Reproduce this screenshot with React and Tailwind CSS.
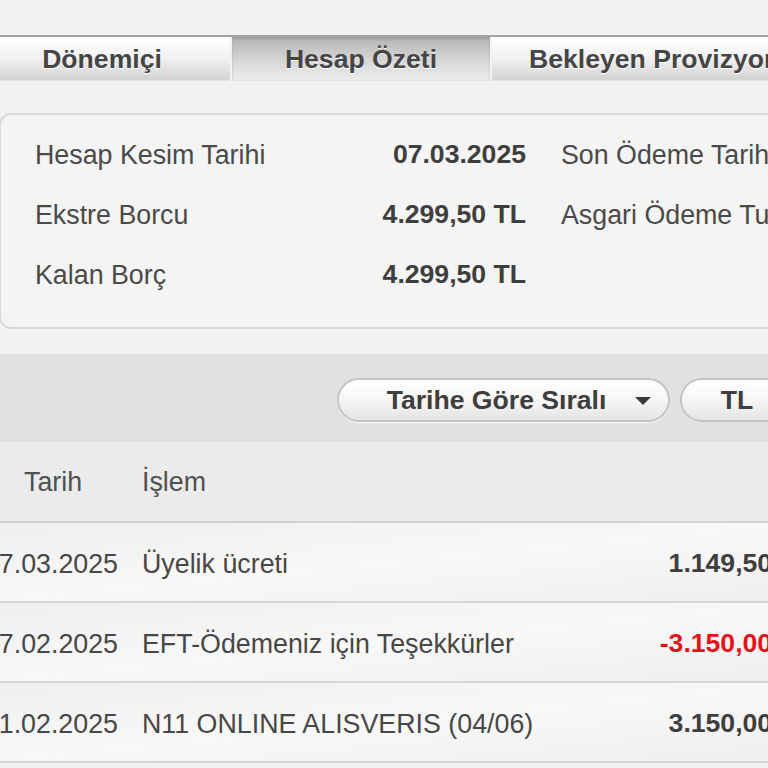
import React from 'react';

const summary = [
  { label: 'Hesap Kesim Tarihi', value: '07.03.2025', extra: 'Son Ödeme Tarihi' },
  { label: 'Ekstre Borcu', value: '4.299,50 TL', extra: 'Asgari Ödeme Tutarı' },
  { label: 'Kalan Borç', value: '4.299,50 TL', extra: '' },
];

const rows = [
  { date: '07.03.2025', desc: 'Üyelik ücreti', amount: '1.149,50 TL', neg: false },
  { date: '17.02.2025', desc: 'EFT-Ödemeniz için Teşekkürler', amount: '-3.150,00 TL', neg: true },
  { date: '11.02.2025', desc: 'N11 ONLINE ALISVERIS (04/06)', amount: '3.150,00 TL', neg: false },
];

function Tab({ label, active, className }) {
  return (
    <div
      className={`flex h-full shrink-0 items-center justify-center whitespace-nowrap border-b border-[#e2e2e2] pt-[3px] text-[26.6px] font-bold text-[#454545] [text-shadow:0_1px_0_#fff] ${
        active
          ? 'bg-gradient-to-b from-[#b4b4b4] via-[#d4d4d4] to-[#ececec] shadow-[inset_0_2px_3px_rgba(0,0,0,0.15)]'
          : 'bg-gradient-to-b from-[#ffffff] via-[#f1f1f1] to-[#d3d3d3]'
      } ${className}`}
    >
      {label}
    </div>
  );
}

export default function App() {
  return (
    <div className="h-[768px] w-[768px] overflow-hidden bg-[#f2f2f2] font-['Liberation_Sans',Arial,sans-serif] text-[#474747]">
      <div className="h-[35px]" />

      {/* tabs */}
      <div className="ml-[-26px] flex h-[46px] w-[900px] gap-[2px] border-t-2 border-[#a3a3a3]">
        <Tab label="Dönemiçi" className="w-[256px]" />
        <Tab label="Hesap Özeti" active className="w-[258px]" />
        <Tab label="Bekleyen Provizyonlar" className="px-[37px]" />
      </div>

      {/* summary card */}
      <div className="ml-[-1px] mt-[32px] h-[216px] w-[820px] rounded-[12px] border-2 border-[#d9d9d9] bg-[#f4f4f4] pt-[10px]">
        {summary.map((s) => (
          <div key={s.label} className="flex h-[60px] items-center whitespace-nowrap pl-[34px]">
            <div className="w-[300px] text-[26.8px] text-[#4a4a4a]">{s.label}</div>
            <div className="w-[191px] text-right text-[26.6px] font-bold text-[#3e3e3e]">{s.value}</div>
            <div className="ml-[35px] text-[26.8px] text-[#4a4a4a]">{s.extra}</div>
          </div>
        ))}
      </div>

      {/* toolbar */}
      <div className="mt-[25px] flex h-[88px] w-[900px] items-center gap-[10px] bg-[#e1e1e1] pl-[337px] pt-[3px]">
        <div className="relative flex h-[44px] w-[333px] items-center justify-center rounded-full border-2 border-[#c4c4c4] bg-gradient-to-b from-[#ffffff] via-[#f6f6f6] to-[#e4e4e4] pr-[14px] pt-[2px] text-[26.6px] font-bold text-[#3e3e3e] shadow-[0_1px_1px_rgba(255,255,255,0.9)]">
          Tarihe Göre Sıralı
          <svg className="absolute right-[16px] top-[16px]" width="18" height="10" viewBox="0 0 18 10">
            <path d="M1 1 L17 1 L9 9 Z" fill="#3a3a3a" />
          </svg>
        </div>
        <div className="flex h-[44px] w-[114px] items-center justify-center rounded-full border-2 border-[#c4c4c4] bg-gradient-to-b from-[#ffffff] via-[#f6f6f6] to-[#e4e4e4] pt-[2px] text-[26.6px] font-bold text-[#3e3e3e]">
          TL
        </div>
      </div>

      {/* table header */}
      <div className="flex h-[81px] w-[820px] items-center border-b-2 border-[#d2d2d2] bg-[#ebebeb] pt-[2px] text-[26.8px] text-[#505050]">
        <div className="w-[142px] pl-[24px]">Tarih</div>
        <div>İşlem</div>
      </div>

      {/* rows */}
      {rows.map((r) => (
        <div
          key={r.date + r.desc}
          className="flex h-[80px] w-[812px] items-center whitespace-nowrap border-b-2 border-[#d6d6d6] bg-gradient-to-br from-[#efefef] via-[#f8f8f8] to-[#eeeeee] pt-[4px] text-[26.8px] text-[#474747]"
        >
          <div className="w-[142px] shrink-0">
            <span className="ml-[-30px] block w-[148px] text-right">{r.date}</span>
          </div>
          <div className="flex-1">{r.desc}</div>
          <div className={`text-right text-[26.6px] font-bold ${r.neg ? 'text-[#e5121c]' : 'text-[#3e3e3e]'}`}>
            {r.amount}
          </div>
        </div>
      ))}
    </div>
  );
}
